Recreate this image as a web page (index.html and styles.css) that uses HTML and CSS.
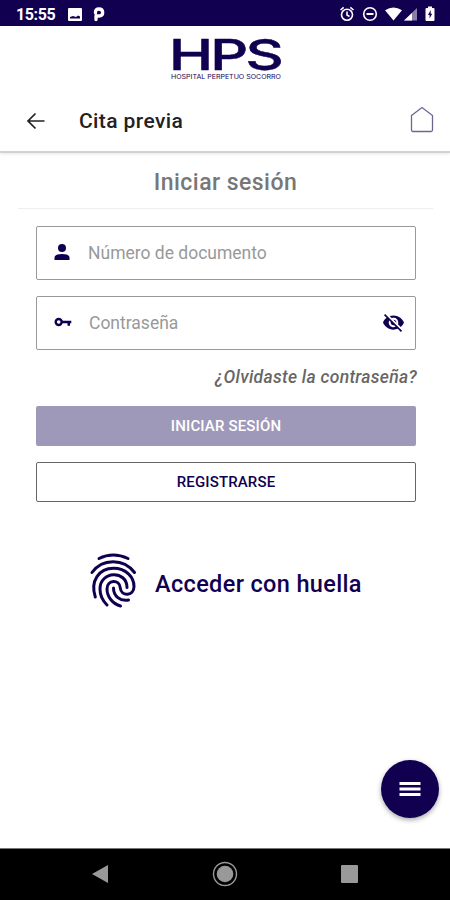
FILE: index.html
```html
<!DOCTYPE html>
<html lang="es">
<head>
  <meta charset="UTF-8">
  <meta name="viewport" content="width=device-width, initial-scale=1.0">
  <title>Cita previa</title>
  <link rel="stylesheet" href="styles.css">
</head>
<body>

<div class="status-bar">
  <span class="clock">15:55</span>
  <svg class="status-image" width="14" height="13" viewBox="0 0 14 13"><path fill="#fff" fill-rule="evenodd" d="M1 0h12q1 0 1 1v11q0 1-1 1H1q-1 0-1-1V1Q0 0 1 0zM2 10.500h10V8.500L10 7.500 8 9 5 8 2 9z"/></svg>
  <svg class="status-p" width="12" height="15" viewBox="0 0 12 15"><path d="M3 12.500V9M2.500 6V5q0-3 3.300-3Q9.700 2 9.700 5.500T6 9H3" fill="none" stroke="#fff" stroke-width="3.300" stroke-linecap="round"/></svg>
  <div class="status-icons">
    <svg width="16" height="16" viewBox="0 0 16 16" fill="none" stroke="#fff" stroke-width="1.600"><circle cx="8" cy="8.700" r="5.500"/><path d="M1.500 4L4.700 1.300M14.500 4l-3.200-2.700M8 5.500V9l2.500 1.500"/></svg>
    <svg width="16" height="16" viewBox="0 0 16 16" fill="none" stroke="#fff" stroke-width="1.600"><circle cx="8" cy="8" r="6.300"/><path d="M4.500 8h7" stroke-width="2"/></svg>
    <svg width="33" height="16" viewBox="0 0 33 16"><path fill="#fff" d="M0 4.300Q8.500-1.500 17 4.300L8.500 14.500z"/><path fill="#8880a8" d="M32 2v12.500H19z"/><path fill="#fff" d="M27 7v7.500h-8z"/></svg>
    <svg width="10" height="16" viewBox="0 0 10 16"><path fill="#fff" d="M3 .5h4V2h1.500q1 0 1 1v11q0 1-1 1h-7q-1 0-1-1V3q0-1 1-1H3z"/><path fill="#110050" d="M5.700 4L3 9h1.600v3.500L7.200 7.700H5.700z"/></svg>
  </div>
</div>

<header class="header">
  <svg class="logo" width="130" height="58" viewBox="0 -12 130 58">
    <text class="logo-name" x="0" y="32" textLength="112" lengthAdjust="spacingAndGlyphs">HPS</text>
    <text class="logo-sub" x="2" y="40.500" textLength="110" lengthAdjust="spacingAndGlyphs">HOSPITAL PERPETUO SOCORRO</text>
  </svg>
  <div class="toolbar">
    <svg class="back" width="20" height="18" viewBox="0 0 20 18"><path d="M18.500 9H2M9.500 1.500L2 9l7.500 7.500" fill="none" stroke="#222" stroke-width="1.700"/></svg>
    <h1>Cita previa</h1>
    <svg class="home" width="24" height="27" viewBox="0 0 24 27"><path d="M1.500 9.500L12 1.500l10.500 8V24q0 1.500-1.500 1.500H3Q1.500 25.500 1.500 24z" fill="none" stroke="#6c6790" stroke-width="1.300"/></svg>
  </div>
</header>

<main class="login">
  <h2>Iniciar sesión</h2>
  <div class="field">
    <svg class="field-icon" width="16" height="16" viewBox="0 0 16 16"><circle cx="8" cy="4" r="4"/><path d="M.5 16v-2.500Q.5 10 8 10t7.500 3.500V16z"/></svg>
    <span class="doc">Número de documento</span>
  </div>
  <div class="field">
    <svg class="field-icon" width="18" height="10" viewBox="0 0 18 10"><circle cx="4.700" cy="5" r="3" fill="none" stroke="#110050" stroke-width="2.400"/><path d="M8 3.800h9.300v2.400H16v2.500h-2.500V6.200H8z"/></svg>
    <span class="pass">Contraseña</span>
    <svg class="eye" width="21" height="18" viewBox="1 3 22 19" preserveAspectRatio="none"><path d="M12 7c2.760 0 5 2.240 5 5 0 .65-.13 1.260-.36 1.830l2.920 2.920c1.510-1.260 2.700-2.890 3.430-4.750-1.730-4.390-6-7.500-11-7.500-1.400 0-2.740.25-3.980.7l2.160 2.160C10.740 7.130 11.350 7 12 7zM2 4.270l2.740 2.740C3.080 8.300 1.780 10.020 1 12c1.730 4.390 6 7.500 11 7.500 1.550 0 3.030-.3 4.380-.84L19.730 22 21 20.730 3.270 3 2 4.270zM7.530 9.800l1.550 1.550c-.05.21-.08.43-.08.65 0 1.660 1.340 3 3 3 .22 0 .44-.03.65-.08l1.550 1.550c-.67.33-1.410.53-2.200.53-2.760 0-5-2.240-5-5 0-.79.2-1.530.53-2.200zm4.310-.78l3.150 3.150.02-.16c0-1.660-1.340-3-3-3l-.17.01z"/></svg>
  </div>
  <a class="forgot">¿Olvidaste la contraseña?</a>
  <button class="btn primary">INICIAR SESIÓN</button>
  <button class="btn secondary">REGISTRARSE</button>
  <div class="touch">
    <svg width="50" height="58" viewBox="0 0 50 58" fill="none" stroke="#110050" stroke-width="3" stroke-linecap="round">
      <path d="M11 6.500Q25-.5 40 6.500"/>
      <path d="M4 20.500C14 6 36 6 46.500 20.500"/>
      <path d="M7.300 45C2 29 11 16.300 25.500 16.300C38 16.300 46 25 46 34.500C46 44.500 33 44.500 32.300 36C31.500 27 19 27.500 19 37C19 45 25 52 32.500 54"/>
      <path d="M19 53C13 47 12 42 12 37C12 18.500 39 18 39 35.500"/>
      <path d="M25.500 36C25.500 44 32 49.500 40.500 48"/>
    </svg>
    <span>Acceder con huella</span>
  </div>
</main>

<div class="fab">
  <svg width="22" height="16" viewBox="0 0 22 16"><path d="M.5 2.500h21M.5 8h21M.5 13.500h21" stroke="#fff" stroke-width="3"/></svg>
</div>

<nav class="nav-bar">
  <svg width="16" height="18" viewBox="0 0 16 18"><path fill="#999" d="M0 9L16 0v18z"/></svg>
  <svg width="26" height="26" viewBox="0 0 26 26"><circle cx="13" cy="13" r="11.500" fill="none" stroke="#999" stroke-width="1.400"/><circle cx="13" cy="13" r="8.300" fill="#999"/></svg>
  <svg width="18" height="18" viewBox="0 0 18 18"><rect width="17" height="18" rx="1" fill="#999"/></svg>
</nav>

</body>
</html>
```
FILE: styles.css
```css
* {
  box-sizing: border-box;
}

body {
  --navy: #110050;

  font-family: Roboto, 'Liberation Sans', sans-serif;
  background: #fff;
  margin: 0;
  height: 900px;
  display: flex;
  flex-direction: column;
  overflow: hidden;
  position: relative;
}

svg {
  display: block;
  flex: none;
  overflow: visible;
}

.status-bar {
  height: 26px;
  background: var(--navy);
  color: #fff;
  display: flex;
  align-items: center;
  padding: 2px 15px 0 16px;
}

.clock {
  font-size: 16px;
  font-weight: 700;
  letter-spacing: -0.4px;
  width: 52px;
}

.status-p {
  margin-left: 11px;
}

.status-icons {
  margin-left: auto;
  display: flex;
  gap: 7px;
}

.header {
  height: 127px;
  border-bottom: 2px solid #d2d2d2;
  box-shadow: 0 1px 3px rgba(0, 0, 0, 0.1);
}

.logo {
  margin: 0 0 0 169px;
}

.logo-name {
  font: 500 43px Inter, sans-serif;
  letter-spacing: -2px;
  fill: var(--navy);
  stroke: var(--navy);
  stroke-width: 0.5px;
}

.logo-sub {
  font: 400 6px Inter, sans-serif;
  fill: var(--navy);
}

.toolbar {
  display: flex;
  align-items: center;
  height: 60px;
  margin-top: 7px;
  padding: 0 16px 0 26px;
}

h1 {
  font-size: 21px;
  font-weight: 500;
  letter-spacing: 0.4px;
  color: #222;
  margin: 0 auto 0 33px;
}

.home {
  margin-top: -4px;
}

.login {
  padding: 0 34px 0 36px;
  display: flex;
  flex-direction: column;
}

h2 {
  font-size: 23px;
  font-weight: 500;
  line-height: 50px;
  letter-spacing: 0.45px;
  color: #777;
  text-align: center;
  margin: 0 -17px 17px -18px;
  padding-top: 5px;
  border-bottom: 1px solid #eee;
}

.field {
  height: 54px;
  border: 1px solid #999;
  border-radius: 2px;
  display: flex;
  align-items: center;
  margin-bottom: 16px;
  padding: 0 11px 1px 17px;
  font-size: 17.500px;
  color: #999;
}

.field svg {
  fill: var(--navy);
}

.field-icon {
  margin-bottom: 1px;
}

.doc {
  margin-left: 18px;
}

.pass {
  margin-left: 17px;
}

.eye {
  margin-left: auto;
}

.forgot {
  align-self: flex-end;
  font-size: 17.500px;
  font-weight: 500;
  font-style: italic;
  line-height: 22px;
  letter-spacing: 0.3px;
  color: #666;
  margin: 0 -1px 18px 0;
}

.btn {
  height: 40px;
  border: none;
  border-radius: 2px;
  font: 500 15px Roboto, sans-serif;
  letter-spacing: 0.15px;
  padding: 0;
  margin-bottom: 16px;
}

.primary {
  background: #9f99b9;
  color: #fff;
}

.secondary {
  background: #fff;
  border: 1px solid #666;
  color: var(--navy);
}

.touch {
  display: flex;
  align-items: center;
  gap: 17px;
  margin: 34px 0 0 52px;
  font-size: 23.500px;
  font-weight: 500;
  letter-spacing: 0.35px;
  color: var(--navy);
}

.touch span {
  padding-top: 5px;
}

/* floating menu button */
.fab {
  position: absolute;
  right: 11px;
  bottom: 82px;
  width: 58px;
  height: 58px;
  border-radius: 50%;
  background: var(--navy);
  box-shadow: 0 2px 5px rgba(0, 0, 0, 0.35);
  display: flex;
  align-items: center;
  justify-content: center;
}

.nav-bar {
  margin-top: auto;
  height: 52px;
  background: #000;
  border-top: 1px solid #777;
  display: flex;
  align-items: center;
  justify-content: space-between;
  padding: 0 91px 2px 92px;
}
```
